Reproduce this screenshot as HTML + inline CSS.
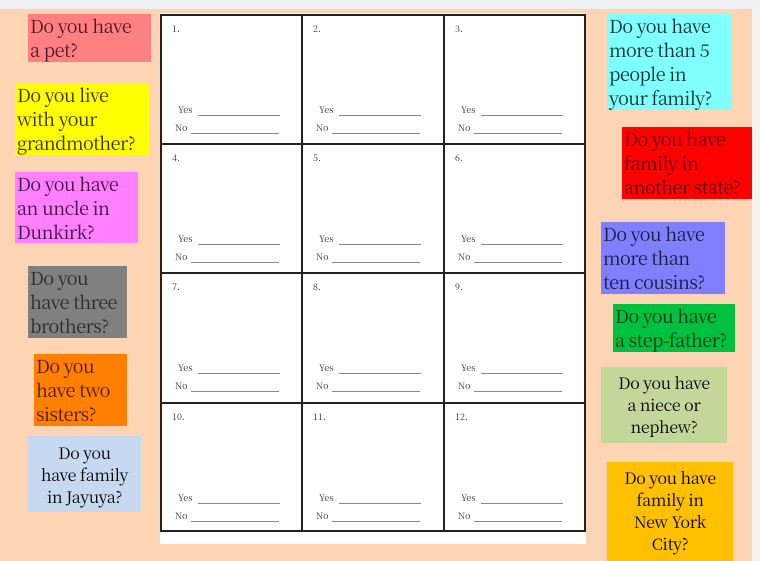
<!DOCTYPE html>
<html><head><meta charset="utf-8"><style>
*{margin:0;padding:0;box-sizing:border-box}
body{width:760px;height:561px;overflow:hidden;background:#f2f2f2;position:relative;font-family:"Noto Serif CJK SC","Liberation Serif",serif}
#peach{position:absolute;left:0;top:9px;width:752px;height:552px;background:#fdd5b5}
#top{position:absolute;left:0;top:0;width:760px;height:9px;background:#eff0f2}
#sheet{position:absolute;left:160px;top:13px;width:426px;height:531px;background:#fff}
.c,.k,.cell{font-family:"Noto Serif CJK SC","Liberation Serif",serif}
.c{position:absolute;font-size:18px;line-height:24px;padding-left:2px;white-space:nowrap;overflow:hidden;letter-spacing:-0.5px}
.k{position:absolute;font-size:16px;line-height:22px;text-align:center;color:#000;white-space:nowrap;letter-spacing:-0.3px}
.h{position:absolute;background:#222}
.cell{position:absolute;font-size:9px;color:#333}
.cell .n{position:absolute;left:10px;top:6px}
.cell .y{position:absolute;left:16px;top:87px}
.cell .o{position:absolute;left:13px;top:105px}
.cell .ly{position:absolute;left:36px;top:99px;width:82px;height:1px;background:#888}
.cell .lo{position:absolute;left:29px;top:117px;width:88px;height:1px;background:#888}
</style></head><body>
<div id="top"></div>
<div id="peach"></div>
<div id="sheet"></div>
<div class="h" style="left:161px;top:14px;width:425px;height:2px"></div>
<div class="h" style="left:161px;top:143px;width:425px;height:2px"></div>
<div class="h" style="left:161px;top:272px;width:425px;height:2px"></div>
<div class="h" style="left:161px;top:402px;width:425px;height:2px"></div>
<div class="h" style="left:161px;top:530px;width:425px;height:2px"></div>
<div class="h" style="left:160px;top:14px;width:2px;height:518px"></div>
<div class="h" style="left:301px;top:14px;width:2px;height:518px"></div>
<div class="h" style="left:443px;top:14px;width:2px;height:518px"></div>
<div class="h" style="left:584px;top:14px;width:2px;height:518px"></div>

<div class="cell" style="left:162px;top:16px"><span class="n">1.</span><span class="y">Yes</span><span class="o">No</span><i class="ly"></i><i class="lo"></i></div>
<div class="cell" style="left:303px;top:16px"><span class="n">2.</span><span class="y">Yes</span><span class="o">No</span><i class="ly"></i><i class="lo"></i></div>
<div class="cell" style="left:445px;top:16px"><span class="n">3.</span><span class="y">Yes</span><span class="o">No</span><i class="ly"></i><i class="lo"></i></div>
<div class="cell" style="left:162px;top:145px"><span class="n">4.</span><span class="y">Yes</span><span class="o">No</span><i class="ly"></i><i class="lo"></i></div>
<div class="cell" style="left:303px;top:145px"><span class="n">5.</span><span class="y">Yes</span><span class="o">No</span><i class="ly"></i><i class="lo"></i></div>
<div class="cell" style="left:445px;top:145px"><span class="n">6.</span><span class="y">Yes</span><span class="o">No</span><i class="ly"></i><i class="lo"></i></div>
<div class="cell" style="left:162px;top:274px"><span class="n">7.</span><span class="y">Yes</span><span class="o">No</span><i class="ly"></i><i class="lo"></i></div>
<div class="cell" style="left:303px;top:274px"><span class="n">8.</span><span class="y">Yes</span><span class="o">No</span><i class="ly"></i><i class="lo"></i></div>
<div class="cell" style="left:445px;top:274px"><span class="n">9.</span><span class="y">Yes</span><span class="o">No</span><i class="ly"></i><i class="lo"></i></div>
<div class="cell" style="left:162px;top:404px"><span class="n">10.</span><span class="y">Yes</span><span class="o">No</span><i class="ly"></i><i class="lo"></i></div>
<div class="cell" style="left:303px;top:404px"><span class="n">11.</span><span class="y">Yes</span><span class="o">No</span><i class="ly"></i><i class="lo"></i></div>
<div class="cell" style="left:445px;top:404px"><span class="n">12.</span><span class="y">Yes</span><span class="o">No</span><i class="ly"></i><i class="lo"></i></div>

<div class="c" style="left:28px;top:14px;width:123px;height:48px;background:#ff8080;color:#4a1a2a">Do you have<br>a pet?</div>
<div class="c" style="left:15px;top:83px;width:134px;height:72px;background:#ffff00;color:#3a3010">Do you live<br>with your<br>grandmother?</div>
<div class="c" style="left:15px;top:172px;width:123px;height:71px;background:#ff80ff;color:#401040">Do you have<br>an uncle in<br>Dunkirk?</div>
<div class="c" style="left:28px;top:266px;width:99px;height:72px;background:#808080;color:#2a2a2a">Do you<br>have three<br>brothers?</div>
<div class="c" style="left:34px;top:354px;width:93px;height:72px;background:#ff8000;color:#4a1a00">Do you<br>have two<br>sisters?</div>
<div class="k" style="left:28px;top:436px;width:113px;height:76px;background:#c6d9f0;padding-top:6px">Do you<br>have family<br>in Jayuya?</div>

<div class="c" style="left:607px;top:14px;width:125px;height:96px;background:#80ffff;color:#103030">Do you have<br>more than 5<br>people in<br>your family?</div>
<div class="c" style="left:622px;top:127px;width:130px;height:72px;background:#ff0000;color:#5a0000">Do you have<br>family in<br>another state?</div>
<div class="c" style="left:601px;top:222px;width:124px;height:72px;background:#8080ff;color:#1a1a40">Do you have<br>more than<br>ten cousins?</div>
<div class="c" style="left:613px;top:304px;width:122px;height:48px;background:#00c040;color:#0a3a10">Do you have<br>a step-father?</div>
<div class="k" style="left:601px;top:367px;width:126px;height:76px;background:#c4d79b;padding-top:5px">Do you have<br>a niece or<br>nephew?</div>
<div class="k" style="left:607px;top:462px;width:126px;height:99px;background:#ffc000;padding-top:5px">Do you have<br>family in<br>New York<br>City?</div>
</body></html>
